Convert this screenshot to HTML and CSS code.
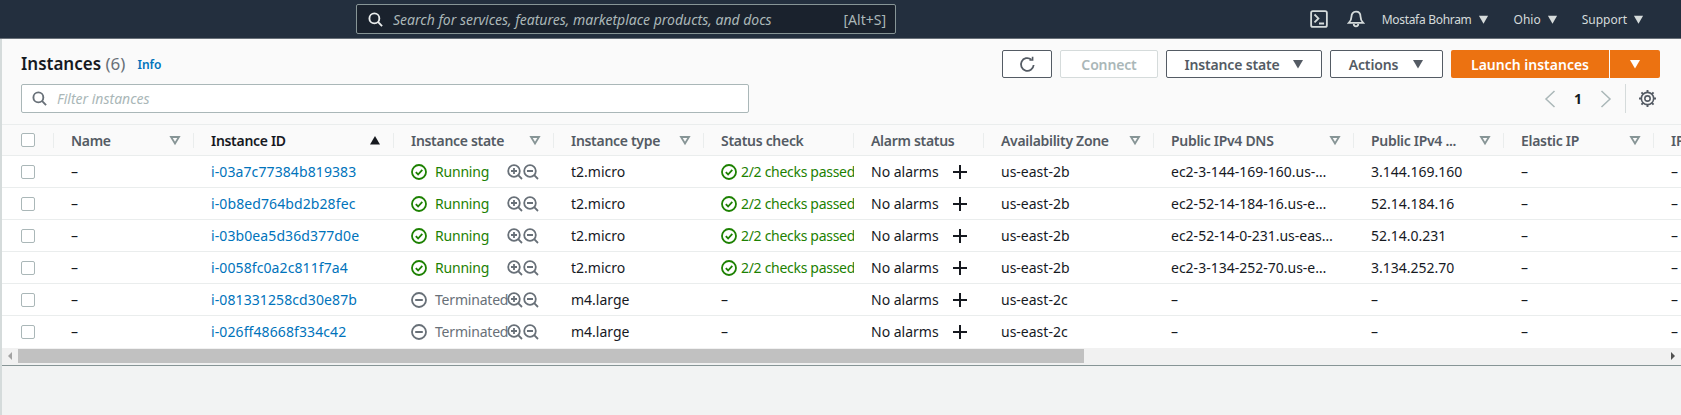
FILE: index.html
```html
<!DOCTYPE html>
<html lang="en">
<head>
    <meta charset="UTF-8">
    <meta name="viewport" content="width=device-width, initial-scale=1.0">
    <title>Instances | EC2</title>
    <link rel="stylesheet" href="styles.css">
</head>
<body>
    <svg class="defs" aria-hidden="true">
        <symbol id="i-search" viewBox="0 0 16 16"><circle cx="6.800" cy="6.800" r="5.300" fill="none" stroke="currentColor" stroke-width="2"/><path d="M10.600 10.600L15 15" fill="none" stroke="currentColor" stroke-width="2"/></symbol>
        <symbol id="i-caret" viewBox="0 0 12 12"><path d="M1 2h10L6 10.500z" fill="currentColor"/></symbol>
        <symbol id="i-filter" viewBox="0 0 12 12"><path d="M2 3h8L6 9.500z" fill="none" stroke="currentColor" stroke-width="1.800"/></symbol>
        <symbol id="i-sort" viewBox="0 0 12 12"><path d="M1 10.500h10L6 2z" fill="currentColor"/></symbol>
        <symbol id="i-ok" viewBox="0 0 16 16"><circle cx="8" cy="8" r="7" fill="none" stroke="currentColor" stroke-width="1.800"/><path d="M4.800 8.200l2.300 2.300 4.200-4.600" fill="none" stroke="currentColor" stroke-width="1.800"/></symbol>
        <symbol id="i-stop" viewBox="0 0 16 16"><circle cx="8" cy="8" r="7" fill="none" stroke="currentColor" stroke-width="1.800"/><path d="M4.200 8h7.600" fill="none" stroke="currentColor" stroke-width="2"/></symbol>
        <symbol id="i-zoomin" viewBox="0 0 16 16"><circle cx="7" cy="7" r="5.800" fill="none" stroke="currentColor" stroke-width="1.800"/><path d="M11.200 11.200L15 15M4 7h6M7 4v6" fill="none" stroke="currentColor" stroke-width="1.800"/></symbol>
        <symbol id="i-zoomout" viewBox="0 0 16 16"><circle cx="7" cy="7" r="5.800" fill="none" stroke="currentColor" stroke-width="1.800"/><path d="M11.200 11.200L15 15M4 7h6" fill="none" stroke="currentColor" stroke-width="1.800"/></symbol>
        <symbol id="i-plus" viewBox="0 0 14 14"><path d="M7 0v14M0 7h14" fill="none" stroke="currentColor" stroke-width="2"/></symbol>
    </svg>

    <header class="topnav">
        <div class="global-search">
            <svg class="global-search-icon"><use href="#i-search"/></svg>
            <span class="global-search-text">Search for services, features, marketplace products, and docs</span>
            <span class="global-search-key">[Alt+S]</span>
        </div>
        <div class="topnav-right">
            <svg class="nav-shell" viewBox="0 0 16 16"><rect x="1" y="1" width="14" height="14" rx="1.500" fill="none" stroke="currentColor" stroke-width="1.600"/><path d="M4 4l3.500 3.500L4 11M8 12h4.500" fill="none" stroke="currentColor" stroke-width="1.600"/></svg>
            <svg class="nav-bell" viewBox="0 0 16 16"><path d="M8 1.500c-2.600 0-4 2-4 4.300 0 2.700-.8 4-2.400 5.700h12.800C12.800 9.800 12 8.500 12 5.800 12 3.500 10.600 1.500 8 1.500z" fill="none" stroke="currentColor" stroke-width="1.600"/><path d="M6 12.500a2 2 0 0 0 4 0" fill="none" stroke="currentColor" stroke-width="1.600"/></svg>
            <span class="nav-item nav-user">Mostafa Bohram <svg class="nav-caret"><use href="#i-caret"/></svg></span>
            <span class="nav-item nav-region">Ohio <svg class="nav-caret"><use href="#i-caret"/></svg></span>
            <span class="nav-item">Support <svg class="nav-caret"><use href="#i-caret"/></svg></span>
        </div>
    </header>

    <main class="page">
        <div class="toolbar">
            <h1 class="title">Instances <span class="count">(6)</span></h1>
            <a class="info">Info</a>
            <div class="actions">
                <button class="btn btn-refresh"><svg viewBox="0 0 16 16"><path d="M13.800 8.500A6 6 0 1 1 11.500 3.200" fill="none" stroke="currentColor" stroke-width="1.700"/><path d="M12.800 .8v3h-3" fill="none" stroke="currentColor" stroke-width="1.500"/></svg></button>
                <button class="btn btn-connect" disabled>Connect</button>
                <button class="btn btn-state">Instance state <svg class="btn-caret"><use href="#i-caret"/></svg></button>
                <button class="btn btn-actions">Actions <svg class="btn-caret"><use href="#i-caret"/></svg></button>
                <div class="launch">
                    <button class="btn-primary btn-launch">Launch instances</button>
                    <button class="btn-primary btn-launch-more"><svg class="btn-caret"><use href="#i-caret"/></svg></button>
                </div>
            </div>
        </div>

        <div class="filterbar">
            <div class="filter">
                <svg class="filter-icon"><use href="#i-search"/></svg>
                <span class="filter-text">Filter instances</span>
            </div>
            <div class="pager">
                <svg class="pager-arrow" viewBox="0 0 12 18"><path d="M10.500 1L2 9l8.500 8" fill="none" stroke="currentColor" stroke-width="1.500"/></svg>
                <span class="pager-num">1</span>
                <svg class="pager-arrow" viewBox="0 0 12 18"><path d="M1.500 1L10 9l-8.500 8" fill="none" stroke="currentColor" stroke-width="1.500"/></svg>
                <span class="pager-gear">
                    <svg viewBox="0 0 16 16"><circle cx="8" cy="8" r="2.500" fill="none" stroke="currentColor" stroke-width="1.500"/><circle cx="8" cy="8" r="5.800" fill="none" stroke="currentColor" stroke-width="1.500"/><path d="M8 0v2.500M8 13.500V16M0 8h2.500M13.500 8H16M2.300 2.300L4 4M12 12l1.700 1.700M13.700 2.300L12 4M4 12l-1.700 1.700" fill="none" stroke="currentColor" stroke-width="1.800"/></svg>
                </span>
            </div>
        </div>

        <div class="table-wrap">
            <table class="instances">
                <thead>
                    <tr>
                        <th class="col-check"><div class="th-in"><span class="check"></span></div></th>
                        <th class="col-name"><div class="th-in">Name <svg class="th-icon"><use href="#i-filter"/></svg></div></th>
                        <th class="col-id"><div class="th-in th-active">Instance ID <svg class="th-icon"><use href="#i-sort"/></svg></div></th>
                        <th class="col-state"><div class="th-in">Instance state <svg class="th-icon"><use href="#i-filter"/></svg></div></th>
                        <th class="col-type"><div class="th-in">Instance type <svg class="th-icon"><use href="#i-filter"/></svg></div></th>
                        <th class="col-status"><div class="th-in">Status check</div></th>
                        <th class="col-alarm"><div class="th-in">Alarm status</div></th>
                        <th class="col-az"><div class="th-in">Availability Zone <svg class="th-icon"><use href="#i-filter"/></svg></div></th>
                        <th class="col-dns"><div class="th-in">Public IPv4 DNS <svg class="th-icon"><use href="#i-filter"/></svg></div></th>
                        <th class="col-ip"><div class="th-in">Public IPv4 ... <svg class="th-icon"><use href="#i-filter"/></svg></div></th>
                        <th class="col-eip"><div class="th-in">Elastic IP <svg class="th-icon"><use href="#i-filter"/></svg></div></th>
                        <th class="col-last"><div class="th-in th-last">IPv6 IPs</div></th>
                    </tr>
                </thead>
                <tbody>
                    <tr>
                        <td><span class="check"></span></td><td>–</td>
                        <td><a class="link">i-03a7c77384b819383</a></td>
                        <td><div class="state run"><svg class="state-icon"><use href="#i-ok"/></svg><span class="state-label">Running</span><svg class="zoom"><use href="#i-zoomin"/></svg><svg class="zoom"><use href="#i-zoomout"/></svg></div></td>
                        <td>t2.micro</td>
                        <td class="clip"><div class="state run"><svg class="state-icon"><use href="#i-ok"/></svg><span>2/2 checks passed</span></div></td>
                        <td><div class="alarm">No alarms <svg class="plus"><use href="#i-plus"/></svg></div></td>
                        <td>us-east-2b</td><td>ec2-3-144-169-160.us-…</td><td>3.144.169.160</td><td>–</td><td>–</td>
                    </tr>
                    <tr>
                        <td><span class="check"></span></td><td>–</td>
                        <td><a class="link">i-0b8ed764bd2b28fec</a></td>
                        <td><div class="state run"><svg class="state-icon"><use href="#i-ok"/></svg><span class="state-label">Running</span><svg class="zoom"><use href="#i-zoomin"/></svg><svg class="zoom"><use href="#i-zoomout"/></svg></div></td>
                        <td>t2.micro</td>
                        <td class="clip"><div class="state run"><svg class="state-icon"><use href="#i-ok"/></svg><span>2/2 checks passed</span></div></td>
                        <td><div class="alarm">No alarms <svg class="plus"><use href="#i-plus"/></svg></div></td>
                        <td>us-east-2b</td><td>ec2-52-14-184-16.us-e…</td><td>52.14.184.16</td><td>–</td><td>–</td>
                    </tr>
                    <tr>
                        <td><span class="check"></span></td><td>–</td>
                        <td><a class="link">i-03b0ea5d36d377d0e</a></td>
                        <td><div class="state run"><svg class="state-icon"><use href="#i-ok"/></svg><span class="state-label">Running</span><svg class="zoom"><use href="#i-zoomin"/></svg><svg class="zoom"><use href="#i-zoomout"/></svg></div></td>
                        <td>t2.micro</td>
                        <td class="clip"><div class="state run"><svg class="state-icon"><use href="#i-ok"/></svg><span>2/2 checks passed</span></div></td>
                        <td><div class="alarm">No alarms <svg class="plus"><use href="#i-plus"/></svg></div></td>
                        <td>us-east-2b</td><td>ec2-52-14-0-231.us-eas…</td><td>52.14.0.231</td><td>–</td><td>–</td>
                    </tr>
                    <tr>
                        <td><span class="check"></span></td><td>–</td>
                        <td><a class="link">i-0058fc0a2c811f7a4</a></td>
                        <td><div class="state run"><svg class="state-icon"><use href="#i-ok"/></svg><span class="state-label">Running</span><svg class="zoom"><use href="#i-zoomin"/></svg><svg class="zoom"><use href="#i-zoomout"/></svg></div></td>
                        <td>t2.micro</td>
                        <td class="clip"><div class="state run"><svg class="state-icon"><use href="#i-ok"/></svg><span>2/2 checks passed</span></div></td>
                        <td><div class="alarm">No alarms <svg class="plus"><use href="#i-plus"/></svg></div></td>
                        <td>us-east-2b</td><td>ec2-3-134-252-70.us-e…</td><td>3.134.252.70</td><td>–</td><td>–</td>
                    </tr>
                    <tr>
                        <td><span class="check"></span></td><td>–</td>
                        <td><a class="link">i-081331258cd30e87b</a></td>
                        <td><div class="state term"><svg class="state-icon"><use href="#i-stop"/></svg><span class="state-label">Terminated</span><svg class="zoom"><use href="#i-zoomin"/></svg><svg class="zoom"><use href="#i-zoomout"/></svg></div></td>
                        <td>m4.large</td>
                        <td>–</td>
                        <td><div class="alarm">No alarms <svg class="plus"><use href="#i-plus"/></svg></div></td>
                        <td>us-east-2c</td><td>–</td><td>–</td><td>–</td><td>–</td>
                    </tr>
                    <tr>
                        <td><span class="check"></span></td><td>–</td>
                        <td><a class="link">i-026ff48668f334c42</a></td>
                        <td><div class="state term"><svg class="state-icon"><use href="#i-stop"/></svg><span class="state-label">Terminated</span><svg class="zoom"><use href="#i-zoomin"/></svg><svg class="zoom"><use href="#i-zoomout"/></svg></div></td>
                        <td>m4.large</td>
                        <td>–</td>
                        <td><div class="alarm">No alarms <svg class="plus"><use href="#i-plus"/></svg></div></td>
                        <td>us-east-2c</td><td>–</td><td>–</td><td>–</td><td>–</td>
                    </tr>
                </tbody>
            </table>
        </div>

        <div class="hscroll">
            <span class="hscroll-arrow hscroll-left"></span>
            <div class="hscroll-track"><div class="hscroll-thumb"></div></div>
            <span class="hscroll-arrow hscroll-right"></span>
        </div>
        <div class="bottom-pane"></div>
    </main>
</body>
</html>
```

FILE: styles.css
```css
* {
    box-sizing: border-box;
}
html, body {
    height: 100%;
}
body {
    margin: 0;
    font-family: "Noto Sans", Arial, sans-serif;
    font-size: 14px;
    color: #16191f;
    background: #f2f3f3;
    display: flex;
    flex-direction: column;
    overflow: hidden;
}
.defs {
    display: none;
}

/* top nav */
.topnav {
    height: 39px;
    flex: none;
    background: #232f3e;
    border-bottom: 1px solid #687078;
    display: flex;
    align-items: center;
    padding-left: 356px;
    color: #d5dbdb;
}
.global-search {
    width: 540px;
    height: 30px;
    background: #1a222d;
    border: 1px solid #879596;
    border-radius: 2px;
    display: flex;
    align-items: center;
    padding: 0 9px 0 11px;
}
.global-search-icon {
    width: 15px;
    height: 15px;
    color: #eaeded;
    margin-right: 10px;
}
.global-search-text {
    font-style: italic;
    color: #aab7b8;
    flex: 1;
    white-space: nowrap;
}
.global-search-key {
    color: #aab7b8;
}
.topnav-right {
    margin-left: auto;
    display: flex;
    align-items: center;
    padding-right: 37px;
    font-size: 12px;
}
.nav-shell {
    width: 18px;
    height: 18px;
    margin-right: 19px;
}
.nav-bell {
    width: 18px;
    height: 18px;
    margin-right: 17px;
}
.nav-item {
    display: flex;
    align-items: center;
    gap: 6px;
    white-space: nowrap;
}
.nav-user {
    margin-right: 25px;
    letter-spacing: -.3px;
}
.nav-region {
    margin-right: 24px;
}
.nav-caret {
    width: 11px;
    height: 11px;
}

/* main pane */
.page {
    flex: 1;
    display: flex;
    flex-direction: column;
    background: #fafafa;
    border-left: 2px solid #d5dbdb;
    min-height: 0;
}
.toolbar {
    display: flex;
    align-items: center;
    height: 28px;
    margin-top: 11px;
    padding: 0 21px 0 19px;
}
.title {
    margin: -2px 0 0;
    font-size: 17px;
    font-weight: 600;
}
.count {
    font-weight: 400;
    color: #687078;
}
.info {
    margin-left: 12px;
    font-size: 12px;
    font-weight: 600;
    color: #0073bb;
}
.actions {
    margin-left: auto;
    display: flex;
    gap: 8px;
}
.btn {
    height: 28px;
    background: #fff;
    border: 1px solid #545b64;
    border-radius: 2px;
    font-family: inherit;
    font-size: 14px;
    font-weight: 600;
    letter-spacing: -.15px;
    color: #545b64;
    display: flex;
    align-items: center;
    justify-content: center;
    padding: 0;
}
.btn-refresh {
    width: 50px;
}
.btn-refresh svg {
    width: 17px;
    height: 17px;
}
.btn-connect {
    width: 98px;
    border-color: #d5dbdb;
    color: #aab7b8;
}
.btn-state {
    width: 156px;
    gap: 12px;
}
.btn-actions {
    width: 113px;
    gap: 14px;
}
.btn-caret {
    width: 12px;
    height: 12px;
}
.launch {
    display: flex;
    gap: 1px;
}
.btn-primary {
    height: 28px;
    background: #ec7211;
    border: none;
    font-family: inherit;
    font-size: 14px;
    font-weight: 600;
    color: #fff;
    padding: 0;
}
.btn-launch {
    width: 158px;
    border-radius: 2px 0 0 2px;
}
.btn-launch-more {
    width: 50px;
    border-radius: 0 2px 2px 0;
    display: flex;
    align-items: center;
    justify-content: center;
}

.filterbar {
    display: flex;
    align-items: center;
    height: 29px;
    margin-top: 6px;
    padding: 0 25px 0 19px;
}
.filter {
    width: 728px;
    height: 29px;
    background: #fff;
    border: 1px solid #aab7b8;
    border-radius: 2px;
    display: flex;
    align-items: center;
    padding-left: 10px;
}
.filter-icon {
    width: 15px;
    height: 15px;
    color: #687078;
    margin-right: 10px;
}
.filter-text {
    font-style: italic;
    color: #aab7b8;
}
.pager {
    margin-left: auto;
    display: flex;
    align-items: center;
    height: 29px;
}
.pager-arrow {
    width: 12px;
    height: 18px;
    color: #aab7b8;
}
.pager-num {
    width: 44px;
    text-align: center;
    font-weight: 700;
}
.pager-gear {
    margin-left: 13px;
    padding-left: 13px;
    border-left: 1px solid #d5dbdb;
    height: 29px;
    display: flex;
    align-items: center;
    color: #545b64;
}
.pager-gear svg {
    width: 17px;
    height: 17px;
}

/* table */
.table-wrap {
    margin-top: 11px;
    overflow: hidden;
    flex: none;
    background: #fff;
}
.instances {
    border-collapse: collapse;
    table-layout: fixed;
    width: 1804px;
}
.col-check { width: 52px; }
.col-name { width: 140px; }
.col-id { width: 200px; }
.col-state { width: 160px; }
.col-type { width: 150px; }
.col-status { width: 150px; }
.col-alarm { width: 130px; }
.col-az { width: 170px; }
.col-dns { width: 200px; }
.col-ip { width: 150px; }
.col-eip { width: 150px; }
.col-last { width: 152px; }
th {
    height: 31px;
    padding: 0;
    background: #fafafa;
    border-top: 1px solid #eaeded;
    border-bottom: 1px solid #eaeded;
    text-align: left;
    font-weight: 600;
    letter-spacing: -.3px;
    color: #545b64;
}
.th-in {
    height: 15px;
    padding: 0 12px 0 17px;
    border-right: 1px solid #eaeded;
    display: flex;
    align-items: center;
    justify-content: space-between;
    white-space: nowrap;
}
.col-check .th-in {
    padding-left: 19px;
}
.th-active {
    color: #16191f;
}
.th-last {
    border-right: none;
}
.th-icon {
    width: 12px;
    height: 12px;
    color: #879596;
    flex: none;
}
.th-active .th-icon {
    color: #16191f;
}
td {
    height: 32px;
    padding: 0 0 0 17px;
    border-bottom: 1px solid #eaeded;
    white-space: nowrap;
    overflow: hidden;
    background: #fff;
}
td:first-child {
    padding-left: 19px;
}
tbody tr:last-child td {
    border-bottom: none;
}
.check {
    display: block;
    width: 14px;
    height: 14px;
    background: #fff;
    border: 1px solid #aab7b8;
    border-radius: 2px;
}
.link {
    color: #0073bb;
    letter-spacing: .1px;
}
.state {
    display: flex;
    align-items: center;
}
.state.run {
    color: #1d8102;
}
.state.term {
    color: #687078;
}
.state-icon {
    width: 16px;
    height: 16px;
    flex: none;
    margin-right: 8px;
}
.clip .state-icon {
    margin-right: 4px;
}
.clip span {
    letter-spacing: -.3px;
}
.state-label {
    width: 72px;
    letter-spacing: -.2px;
}
.zoom {
    width: 16px;
    height: 16px;
    color: #687078;
    flex: none;
}
.alarm {
    display: flex;
    align-items: center;
    justify-content: space-between;
    padding-right: 17px;
}
.plus {
    width: 14px;
    height: 14px;
    color: #16191f;
}

/* fake scrollbar, the table itself is clipped */
.hscroll {
    flex: none;
    height: 17px;
    background: #f1f1f1;
    display: flex;
    align-items: center;
}
.hscroll-arrow {
    width: 16px;
    flex: none;
    display: flex;
    justify-content: center;
}
.hscroll-left::before {
    content: "";
    border: 4px solid transparent;
    border-left: 0;
    border-right: 4px solid #a3a3a3;
}
.hscroll-right::before {
    content: "";
    border: 4px solid transparent;
    border-right: 0;
    border-left: 4px solid #505050;
}
.hscroll-track {
    flex: 1;
    height: 14px;
}
.hscroll-thumb {
    width: 1066px;
    height: 14px;
    background: #c1c1c1;
}
.bottom-pane {
    flex: 1;
    background: #f2f3f3;
    border-top: 1px solid #879596;
}
```
